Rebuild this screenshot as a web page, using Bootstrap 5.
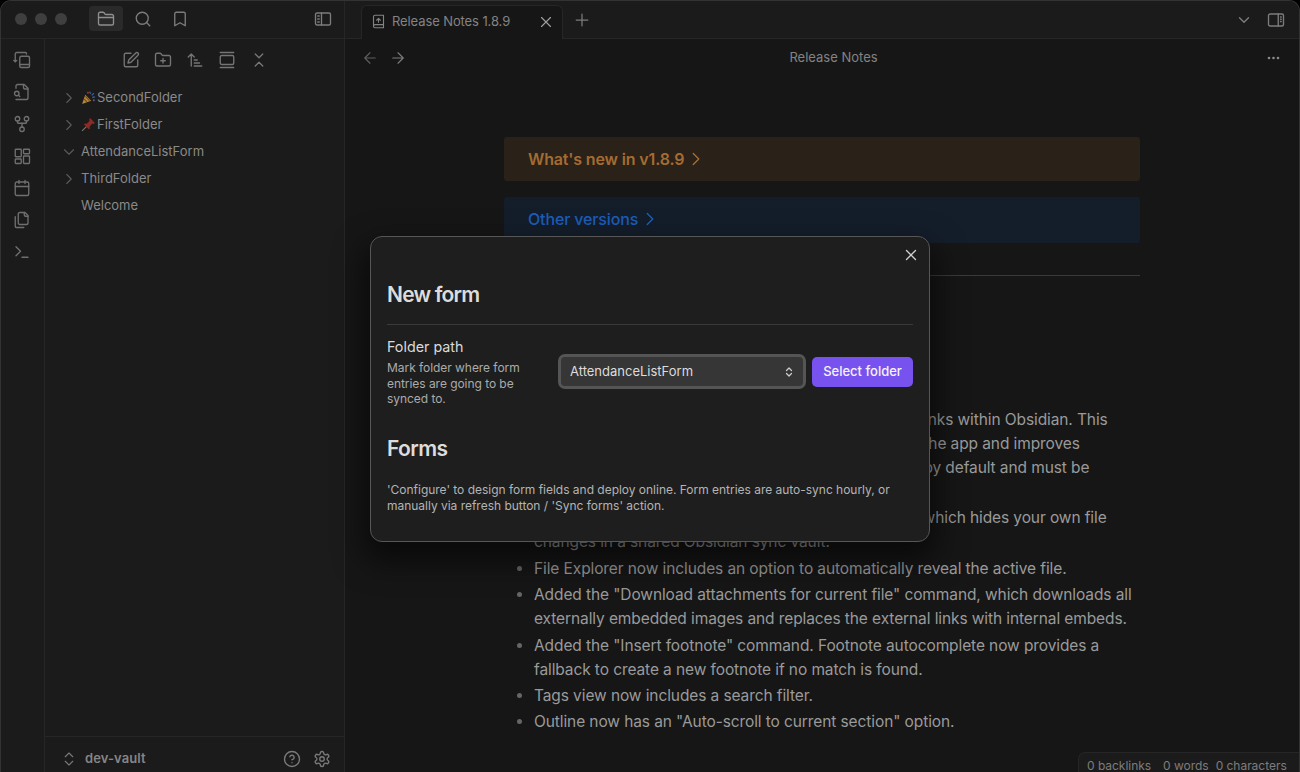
<!doctype html>
<html lang="en" data-bs-theme="dark">
<head>
<meta charset="utf-8">
<title>Release Notes 1.8.9</title>
<link href="https://cdn.jsdelivr.net/npm/bootstrap@5.3.0/dist/css/bootstrap.min.css" rel="stylesheet">
<style>
html,body{height:100%;margin:0;background:#000;overflow:hidden}
body{font-family:Inter,"Liberation Sans",sans-serif;color:#999}
.ob-win{height:772px;width:1300px;border:1px solid #333;border-bottom:0;border-radius:11px 11px 0 0;overflow:hidden;background:#161616;position:relative}
.ob-left{width:344px;flex:none;background:#1b1b1b;border-right:1px solid #262626}
.ob-i{width:18px;height:18px;fill:none;stroke:currentColor;stroke-width:1.8;stroke-linecap:round;stroke-linejoin:round;flex:none;display:block}
.ob-i-t{stroke-width:1.5}
.ob-title{height:38px;border-bottom:1px solid #262626;padding:0 0 2px 14px}
.ob-dot{width:12px;height:12px;border-radius:50%;background:#3f3f3f;margin-right:8px}
.ob-tbtn{width:34px;height:25px;border-radius:4px;color:#7c7c7c}
.ob-tbtn-on{background:#2a2a2a;color:#8f8f8f}
.ob-first{margin-left:14px}
.ob-gap3{margin-left:3px}
.ob-ribbon{width:44px;flex:none;border-right:1px solid #262626;color:#6f6f6f;padding:12px 1px 0 0;gap:14px}
.ob-tools{height:42px;padding-left:77px;gap:14px;color:#757575}
.ob-tree{padding-top:3px;font-size:13px;color:#8a8a8a;padding-left:15px}
.ob-row{height:27px;line-height:27px}
.ob-chev{color:#5a5a5a;margin-right:3px}
.ob-emoji{width:15px;height:15px;margin-right:1px;flex:none}
.ob-welcome{padding-left:21px}
.ob-foot{height:36px;border-top:1px solid #262626;padding:8px 13px 0 15px;color:#7a7a7a}
.ob-vault{font-size:13px;font-weight:600;color:#858585;margin-left:7px;letter-spacing:.1px}
.ob-tabbar{height:38px;background:#1b1b1b;border-bottom:1px solid #262626;padding-left:16px;color:#7c7c7c}
.ob-tabitem{width:202px;height:34px;margin-top:4px;margin-bottom:-1px;background:#161616;border:1px solid #262626;border-bottom:0;border-radius:6px 6px 0 0;font-size:13px;color:#838383;padding:0 7px 2px 9px;letter-spacing:-.1px}
.ob-book{width:15px;height:15px;margin-right:6px}
.ob-tabx{color:#a0a0a0}
.ob-plus{width:20px;height:20px;margin:9px 0 0 9px}
.ob-tabr{margin-top:10px;margin-left:14px}
.ob-tabend{margin-right:14px}
.ob-view{height:38px;color:#5f5f5f;font-size:13px;padding:0 19px 0 16px}
.ob-fwd{color:#7c7c7c;margin-left:10px}
.ob-vtitle{color:#838383;padding-right:7px}
.ob-doc{width:636px;font-size:15.500px;line-height:24px;color:#9a9a9a;padding-top:60px}
.ob-call{border-radius:3px;font-weight:600;padding:0 24px;font-size:16px;letter-spacing:-.15px}
.ob-cchev{width:22px;height:22px;margin-left:1px;stroke-width:1.5}
.ob-orange{height:44px;background:#2a2119;color:#a46c32}
.ob-blue{height:46px;margin-top:16px;background:#141e2b;color:#1c5dbb;font-weight:500;padding-bottom:2px}
.ob-rule{margin:32px 0 0;border:0;border-top:1px solid #3a3a3a;opacity:1}
.ob-h{font-size:24px;line-height:32px;font-weight:600;color:#b5b5b5;margin:66px 0 34px}
.ob-list{padding-left:30px;margin:0;letter-spacing:-.1px}
.ob-list li{margin-bottom:2.400px}
.ob-list li::marker{color:#666}
.ob-status{position:absolute;right:0;bottom:0;height:20px;width:221px;background:#1b1b1b;border:1px solid #262626;border-width:1px 0 0 1px;border-radius:7px 0 0 0;font-size:12px;color:#7d7d7d;padding:7px 0 0 8px;gap:12px;line-height:12px;white-space:nowrap;letter-spacing:-.03px}
.ob-status span:last-child{margin-left:-5px}
.ob-modal{position:absolute;left:369px;top:235px;width:560px;height:306px;background:#1e1e1e;border:1px solid #565656;border-radius:12px;box-shadow:0 14px 30px 6px rgba(0,0,0,.55);padding:16px;color:#dadada}
.ob-x{position:absolute;top:9px;right:9px;color:#d0d0d0}
.ob-mh{font-size:21px;font-weight:600;line-height:28px;letter-spacing:-.8px;margin:28px 0 15px;color:#dcdcdc}
.ob-setting{border-top:1px solid #3a3a3a;padding-top:13px;gap:6px}
.ob-sname{font-size:14.300px;line-height:18px;color:#dadada}
.ob-sdesc{font-size:12px;line-height:15.500px;color:#ababab;margin-top:4px;width:150px;letter-spacing:-.05px}
.ob-slabel{width:165px;flex:none}
.ob-select.form-select{width:248px;height:35px;flex:none;background-color:#363636;color:#dcdcdc;border:3px solid #555;border-radius:7px;font-size:13px;padding:0 24px 0 9px;box-shadow:none;margin-top:16px;background-position:right 8px center;background-size:12px 12px;background-image:url("data:image/svg+xml,%3Csvg xmlns='http://www.w3.org/2000/svg' viewBox='0 0 24 24' fill='none' stroke='%23cfcfcf' stroke-width='2.4' stroke-linecap='round' stroke-linejoin='round'%3E%3Cpath d='m7 15 5 5 5-5M7 9l5-5 5 5'/%3E%3C/svg%3E")}
.ob-cta.btn{width:101px;height:30px;padding:0;background:#7852ee;border:0;color:#f4f4f4;font-size:13px;font-weight:500;border-radius:5px;margin-top:19px;flex:none}
.ob-mh.ob-forms{margin:28px 0 19px;letter-spacing:-.6px}
.ob-mtext{font-size:12px;line-height:16px;color:#b4b4b4;margin:0;letter-spacing:-.02px}
</style>
</head>
<body>
<svg width="0" height="0" class="position-absolute" aria-hidden="true">
<symbol id="i-folder" viewBox="0 0 24 24"><path d="M4 20h16a2 2 0 0 0 2-2V8a2 2 0 0 0-2-2h-7.93a2 2 0 0 1-1.66-.9l-.82-1.2A2 2 0 0 0 7.93 3H4a2 2 0 0 0-2 2v13c0 1.1.9 2 2 2Z"/><path d="M2 10h20"/></symbol>
<symbol id="i-search" viewBox="0 0 24 24"><circle cx="11" cy="11" r="8"/><path d="m21 21-4.3-4.3"/></symbol>
<symbol id="i-bookmark" viewBox="0 0 24 24"><path d="m19 21-7-4-7 4V5a2 2 0 0 1 2-2h10a2 2 0 0 1 2 2v16z"/></symbol>
<symbol id="i-sideleft" viewBox="0 0 24 24"><rect x="2" y="4" width="20" height="16" rx="2"/><path d="M10 4v16M5 8h2M5 12h2M5 16h2"/></symbol>
<symbol id="i-sideright" viewBox="0 0 24 24"><rect x="2" y="4" width="20" height="16" rx="2"/><path d="M15 4v16M18 8h1M18 11h1M18 14h1"/></symbol>
<symbol id="i-switch" viewBox="0 0 24 24"><rect x="9" y="7" width="13" height="15" rx="2"/><path d="M9 18h13M18 4V3.5A1.5 1.5 0 0 0 16.5 2H5a2 2 0 0 0-2 2v10.5M1 12.5l2 2 2-2"/></symbol>
<symbol id="i-filesearch" viewBox="0 0 24 24"><path d="M4 22h14a2 2 0 0 0 2-2V7l-5-5H6a2 2 0 0 0-2 2v3"/><path d="M14 2v4a2 2 0 0 0 2 2h4"/><circle cx="5" cy="14" r="3"/><path d="m9 18-1.5-1.5"/></symbol>
<symbol id="i-graph" viewBox="0 0 24 24"><circle cx="12" cy="19" r="3"/><circle cx="6" cy="5" r="3"/><circle cx="18" cy="5" r="3"/><path d="M18 8v2c0 .6-.4 1-1 1H7c-.6 0-1-.4-1-1V8"/><path d="M12 11v5"/></symbol>
<symbol id="i-dash" viewBox="0 0 24 24"><rect x="3" y="3" width="8" height="10" rx="1"/><rect x="14" y="3" width="8" height="6" rx="1"/><rect x="14" y="12" width="8" height="10" rx="1"/><rect x="3" y="16" width="8" height="6" rx="1"/></symbol>
<symbol id="i-cal" viewBox="0 0 24 24"><rect x="3" y="4" width="18" height="18" rx="2"/><path d="M8 2v4M16 2v4M3 10h18"/></symbol>
<symbol id="i-files" viewBox="0 0 24 24"><path d="M20 7h-3a2 2 0 0 1-2-2V2"/><path d="M9 18a2 2 0 0 1-2-2V4a2 2 0 0 1 2-2h7l4 4v10a2 2 0 0 1-2 2Z"/><path d="M3 7.6v12.8A1.6 1.6 0 0 0 4.6 22h9.8"/></symbol>
<symbol id="i-term" viewBox="0 0 24 24"><path d="m4 17 6-6-6-6M12 19h8"/></symbol>
<symbol id="i-edit" viewBox="0 0 24 24"><path d="M12 3H5a2 2 0 0 0-2 2v14a2 2 0 0 0 2 2h14a2 2 0 0 0 2-2v-7"/><path d="M18.375 2.625a2.121 2.121 0 1 1 3 3L12 15l-4 1 1-4Z"/></symbol>
<symbol id="i-fplus" viewBox="0 0 24 24"><path d="M12 10v6M9 13h6"/><path d="M20 20a2 2 0 0 0 2-2V8a2 2 0 0 0-2-2h-7.9a2 2 0 0 1-1.69-.9L9.6 3.9A2 2 0 0 0 7.93 3H4a2 2 0 0 0-2 2v13a2 2 0 0 0 2 2Z"/></symbol>
<symbol id="i-sort" viewBox="0 0 24 24"><path d="m3 8 4-4 4 4M7 4v16M11 12h4M11 16h7M11 20h10"/></symbol>
<symbol id="i-gallery" viewBox="0 0 24 24"><path d="M3 2h18"/><rect x="3" y="6" width="18" height="12" rx="2"/><path d="M3 22h18"/></symbol>
<symbol id="i-collapse" viewBox="0 0 24 24"><path d="m7 20 5-5 5 5M7 4l5 5 5-5"/></symbol>
<symbol id="i-right" viewBox="0 0 24 24"><path d="m9 18 6-6-6-6"/></symbol>
<symbol id="i-down" viewBox="0 0 24 24"><path d="m6 9 6 6 6-6"/></symbol>
<symbol id="i-updown" viewBox="0 0 24 24"><path d="m7 15 5 5 5-5M7 9l5-5 5 5"/></symbol>
<symbol id="i-help" viewBox="0 0 24 24"><circle cx="12" cy="12" r="10"/><path d="M9.09 9a3 3 0 0 1 5.83 1c0 2-3 3-3 3M12 17h.01"/></symbol>
<symbol id="i-gear" viewBox="0 0 24 24"><path d="M12.22 2h-.44a2 2 0 0 0-2 2v.18a2 2 0 0 1-1 1.73l-.43.25a2 2 0 0 1-2 0l-.15-.08a2 2 0 0 0-2.73.73l-.22.38a2 2 0 0 0 .73 2.73l.15.1a2 2 0 0 1 1 1.72v.51a2 2 0 0 1-1 1.74l-.15.09a2 2 0 0 0-.73 2.73l.22.38a2 2 0 0 0 2.73.73l.15-.08a2 2 0 0 1 2 0l.43.25a2 2 0 0 1 1 1.73V20a2 2 0 0 0 2 2h.44a2 2 0 0 0 2-2v-.18a2 2 0 0 1 1-1.73l.43-.25a2 2 0 0 1 2 0l.15.08a2 2 0 0 0 2.73-.73l.22-.39a2 2 0 0 0-.73-2.73l-.15-.08a2 2 0 0 1-1-1.74v-.5a2 2 0 0 1 1-1.74l.15-.09a2 2 0 0 0 .73-2.73l-.22-.38a2 2 0 0 0-2.73-.73l-.15.08a2 2 0 0 1-2 0l-.43-.25a2 2 0 0 1-1-1.73V4a2 2 0 0 0-2-2z"/><circle cx="12" cy="12" r="3"/></symbol>
<symbol id="i-book" viewBox="0 0 24 24"><path d="M4 19.5v-15A2.5 2.5 0 0 1 6.5 2H20v20H6.5a2.5 2.5 0 0 1 0-5H20"/><path d="m9 10 3-3 3 3M12 13V7"/></symbol>
<symbol id="i-x" viewBox="0 0 24 24"><path d="M18 6 6 18M6 6l12 12"/></symbol>
<symbol id="i-plus" viewBox="0 0 24 24"><path d="M5 12h14M12 5v14"/></symbol>
<symbol id="i-left" viewBox="0 0 24 24"><path d="m12 19-7-7 7-7M19 12H5"/></symbol>
<symbol id="i-arrow" viewBox="0 0 24 24"><path d="M5 12h14M12 5l7 7-7 7"/></symbol>
</svg>

<div class="ob-win d-flex">
  <aside class="ob-left d-flex flex-column">
    <div class="ob-title d-flex align-items-center">
      <span class="ob-dot"></span><span class="ob-dot"></span><span class="ob-dot"></span>
      <span class="ob-tbtn ob-tbtn-on ob-first d-flex align-items-center justify-content-center"><svg class="ob-i"><use href="#i-folder"/></svg></span>
      <span class="ob-tbtn ob-gap3 d-flex align-items-center justify-content-center"><svg class="ob-i"><use href="#i-search"/></svg></span>
      <span class="ob-tbtn ob-gap3 d-flex align-items-center justify-content-center"><svg class="ob-i"><use href="#i-bookmark"/></svg></span>
      <span class="ob-tbtn ms-auto me-1 d-flex align-items-center justify-content-center"><svg class="ob-i"><use href="#i-sideleft"/></svg></span>
    </div>
    <div class="d-flex flex-grow-1">
      <div class="ob-ribbon d-flex flex-column align-items-center">
        <svg class="ob-i"><use href="#i-switch"/></svg>
        <svg class="ob-i"><use href="#i-filesearch"/></svg>
        <svg class="ob-i"><use href="#i-graph"/></svg>
        <svg class="ob-i"><use href="#i-dash"/></svg>
        <svg class="ob-i"><use href="#i-cal"/></svg>
        <svg class="ob-i"><use href="#i-files"/></svg>
        <svg class="ob-i"><use href="#i-term"/></svg>
      </div>
      <div class="d-flex flex-column flex-grow-1">
        <div class="ob-tools d-flex align-items-center">
          <svg class="ob-i"><use href="#i-edit"/></svg>
          <svg class="ob-i"><use href="#i-fplus"/></svg>
          <svg class="ob-i"><use href="#i-sort"/></svg>
          <svg class="ob-i"><use href="#i-gallery"/></svg>
          <svg class="ob-i"><use href="#i-collapse"/></svg>
        </div>
        <div class="ob-tree flex-grow-1">
          <div class="ob-row d-flex align-items-center"><svg class="ob-i ob-i-t ob-chev"><use href="#i-right"/></svg>
            <svg class="ob-emoji" viewBox="0 0 14 14"><path d="M1 13 4 4.5 9.5 10Z" fill="#b08a3a"/><path d="M3 8.5l2.5 2.5M4 6l4 4" stroke="#7a3f2c"/><path d="M8 1.5l1 2M12 3l-2 2M10.500 7l2.500-.5" stroke="#3a5f9a" stroke-width="1.200"/><circle cx="6.500" cy="2.500" r=".9" fill="#a33"/><circle cx="12" cy="9.500" r=".9" fill="#7a4f9a"/></svg>
            SecondFolder</div>
          <div class="ob-row d-flex align-items-center"><svg class="ob-i ob-i-t ob-chev"><use href="#i-right"/></svg>
            <svg class="ob-emoji" viewBox="0 0 14 14"><path d="M1 13 6 8" stroke="#777" stroke-width="1"/><path d="M8.500 1 13 5.500 11.500 6.500 10.500 6 8 9l.3 1.700-1 .8L2.800 7l.8-1 1.700.3L8 3.800 7.600 2.600Z" fill="#8c2a26"/></svg>
            FirstFolder</div>
          <div class="ob-row d-flex align-items-center"><svg class="ob-i ob-i-t ob-chev"><use href="#i-down"/></svg>AttendanceListForm</div>
          <div class="ob-row d-flex align-items-center"><svg class="ob-i ob-i-t ob-chev"><use href="#i-right"/></svg>ThirdFolder</div>
          <div class="ob-row ob-welcome">Welcome</div>
        </div>
        <div class="ob-foot d-flex align-items-center">
          <svg class="ob-i ob-i-t"><use href="#i-updown"/></svg>
          <span class="ob-vault flex-grow-1">dev-vault</span>
          <svg class="ob-i me-2"><use href="#i-help"/></svg>
          <svg class="ob-i ms-1"><use href="#i-gear"/></svg>
        </div>
      </div>
    </div>
  </aside>

  <main class="flex-grow-1 d-flex flex-column">
    <div class="ob-tabbar d-flex align-items-start">
      <div class="ob-tabitem d-flex align-items-center">
        <svg class="ob-i ob-book"><use href="#i-book"/></svg>
        <span class="flex-grow-1">Release Notes 1.8.9</span>
        <svg class="ob-i ob-i-t ob-tabx"><use href="#i-x"/></svg>
      </div>
      <svg class="ob-i ob-i-t ob-plus"><use href="#i-plus"/></svg>
      <svg class="ob-i ob-tabr ms-auto"><use href="#i-down"/></svg>
      <svg class="ob-i ob-tabr ob-tabend"><use href="#i-sideright"/></svg>
    </div>
    <div class="ob-view d-flex align-items-center">
      <svg class="ob-i ob-i-t"><use href="#i-left"/></svg>
      <svg class="ob-i ob-i-t ob-fwd"><use href="#i-arrow"/></svg>
      <span class="ob-vtitle flex-grow-1 text-center">Release Notes</span>
      <svg width="13" height="4" viewBox="0 0 13 4" fill="#8a8a8a"><circle cx="2" cy="2" r="1.300"/><circle cx="6.500" cy="2" r="1.300"/><circle cx="11" cy="2" r="1.300"/></svg>
    </div>
    <article class="ob-doc mx-auto">
      <div class="ob-call ob-orange d-flex align-items-center">What's new in v1.8.9<svg class="ob-i ob-cchev"><use href="#i-right"/></svg></div>
      <div class="ob-call ob-blue d-flex align-items-center">Other versions<svg class="ob-i ob-cchev"><use href="#i-right"/></svg></div>
      <hr class="ob-rule">
      <h2 class="ob-h">Shiny new things</h2>
      <ul class="ob-list">
        <li>Web viewer is a fresh core plugin to open all external links within Obsidian. This<br>keeps your research and your notes close together in the app and improves<br>your focus while browsing. The new plugin is kept off by default and must be<br>enabled in Settings.</li>
        <li>Sync history now gives an option to exclude yourself, which hides your own file<br>changes in a shared Obsidian sync vault.</li>
        <li>File Explorer now includes an option to automatically reveal the active file.</li>
        <li>Added the "Download attachments for current file" command, which downloads all externally embedded images and replaces the external links with internal embeds.</li>
        <li>Added the "Insert footnote" command. Footnote autocomplete now provides a fallback to create a new footnote if no match is found.</li>
        <li>Tags view now includes a search filter.</li>
        <li>Outline now has an "Auto-scroll to current section" option.</li>
      </ul>
    </article>
  </main>

  <div class="ob-status d-flex"><span>0 backlinks</span><span>0 words</span><span>0 characters</span></div>

  <div class="ob-modal" role="dialog" aria-label="New form">
    <svg class="ob-i ob-x"><use href="#i-x"/></svg>
    <div class="ob-mh">New form</div>
    <div class="ob-setting d-flex">
      <div class="ob-slabel">
        <div class="ob-sname">Folder path</div>
        <div class="ob-sdesc">Mark folder where form entries are going to be synced to.</div>
      </div>
      <select class="form-select ob-select" aria-label="Folder path"><option>AttendanceListForm</option></select>
      <button type="button" class="btn ob-cta">Select folder</button>
    </div>
    <div class="ob-mh ob-forms">Forms</div>
    <p class="ob-mtext">'Configure' to design form fields and deploy online. Form entries are auto-sync hourly, or manually via refresh button / 'Sync forms' action.</p>
  </div>
</div>
<script src="https://cdn.jsdelivr.net/npm/bootstrap@5.3.0/dist/js/bootstrap.bundle.min.js"></script>
</body>
</html>
